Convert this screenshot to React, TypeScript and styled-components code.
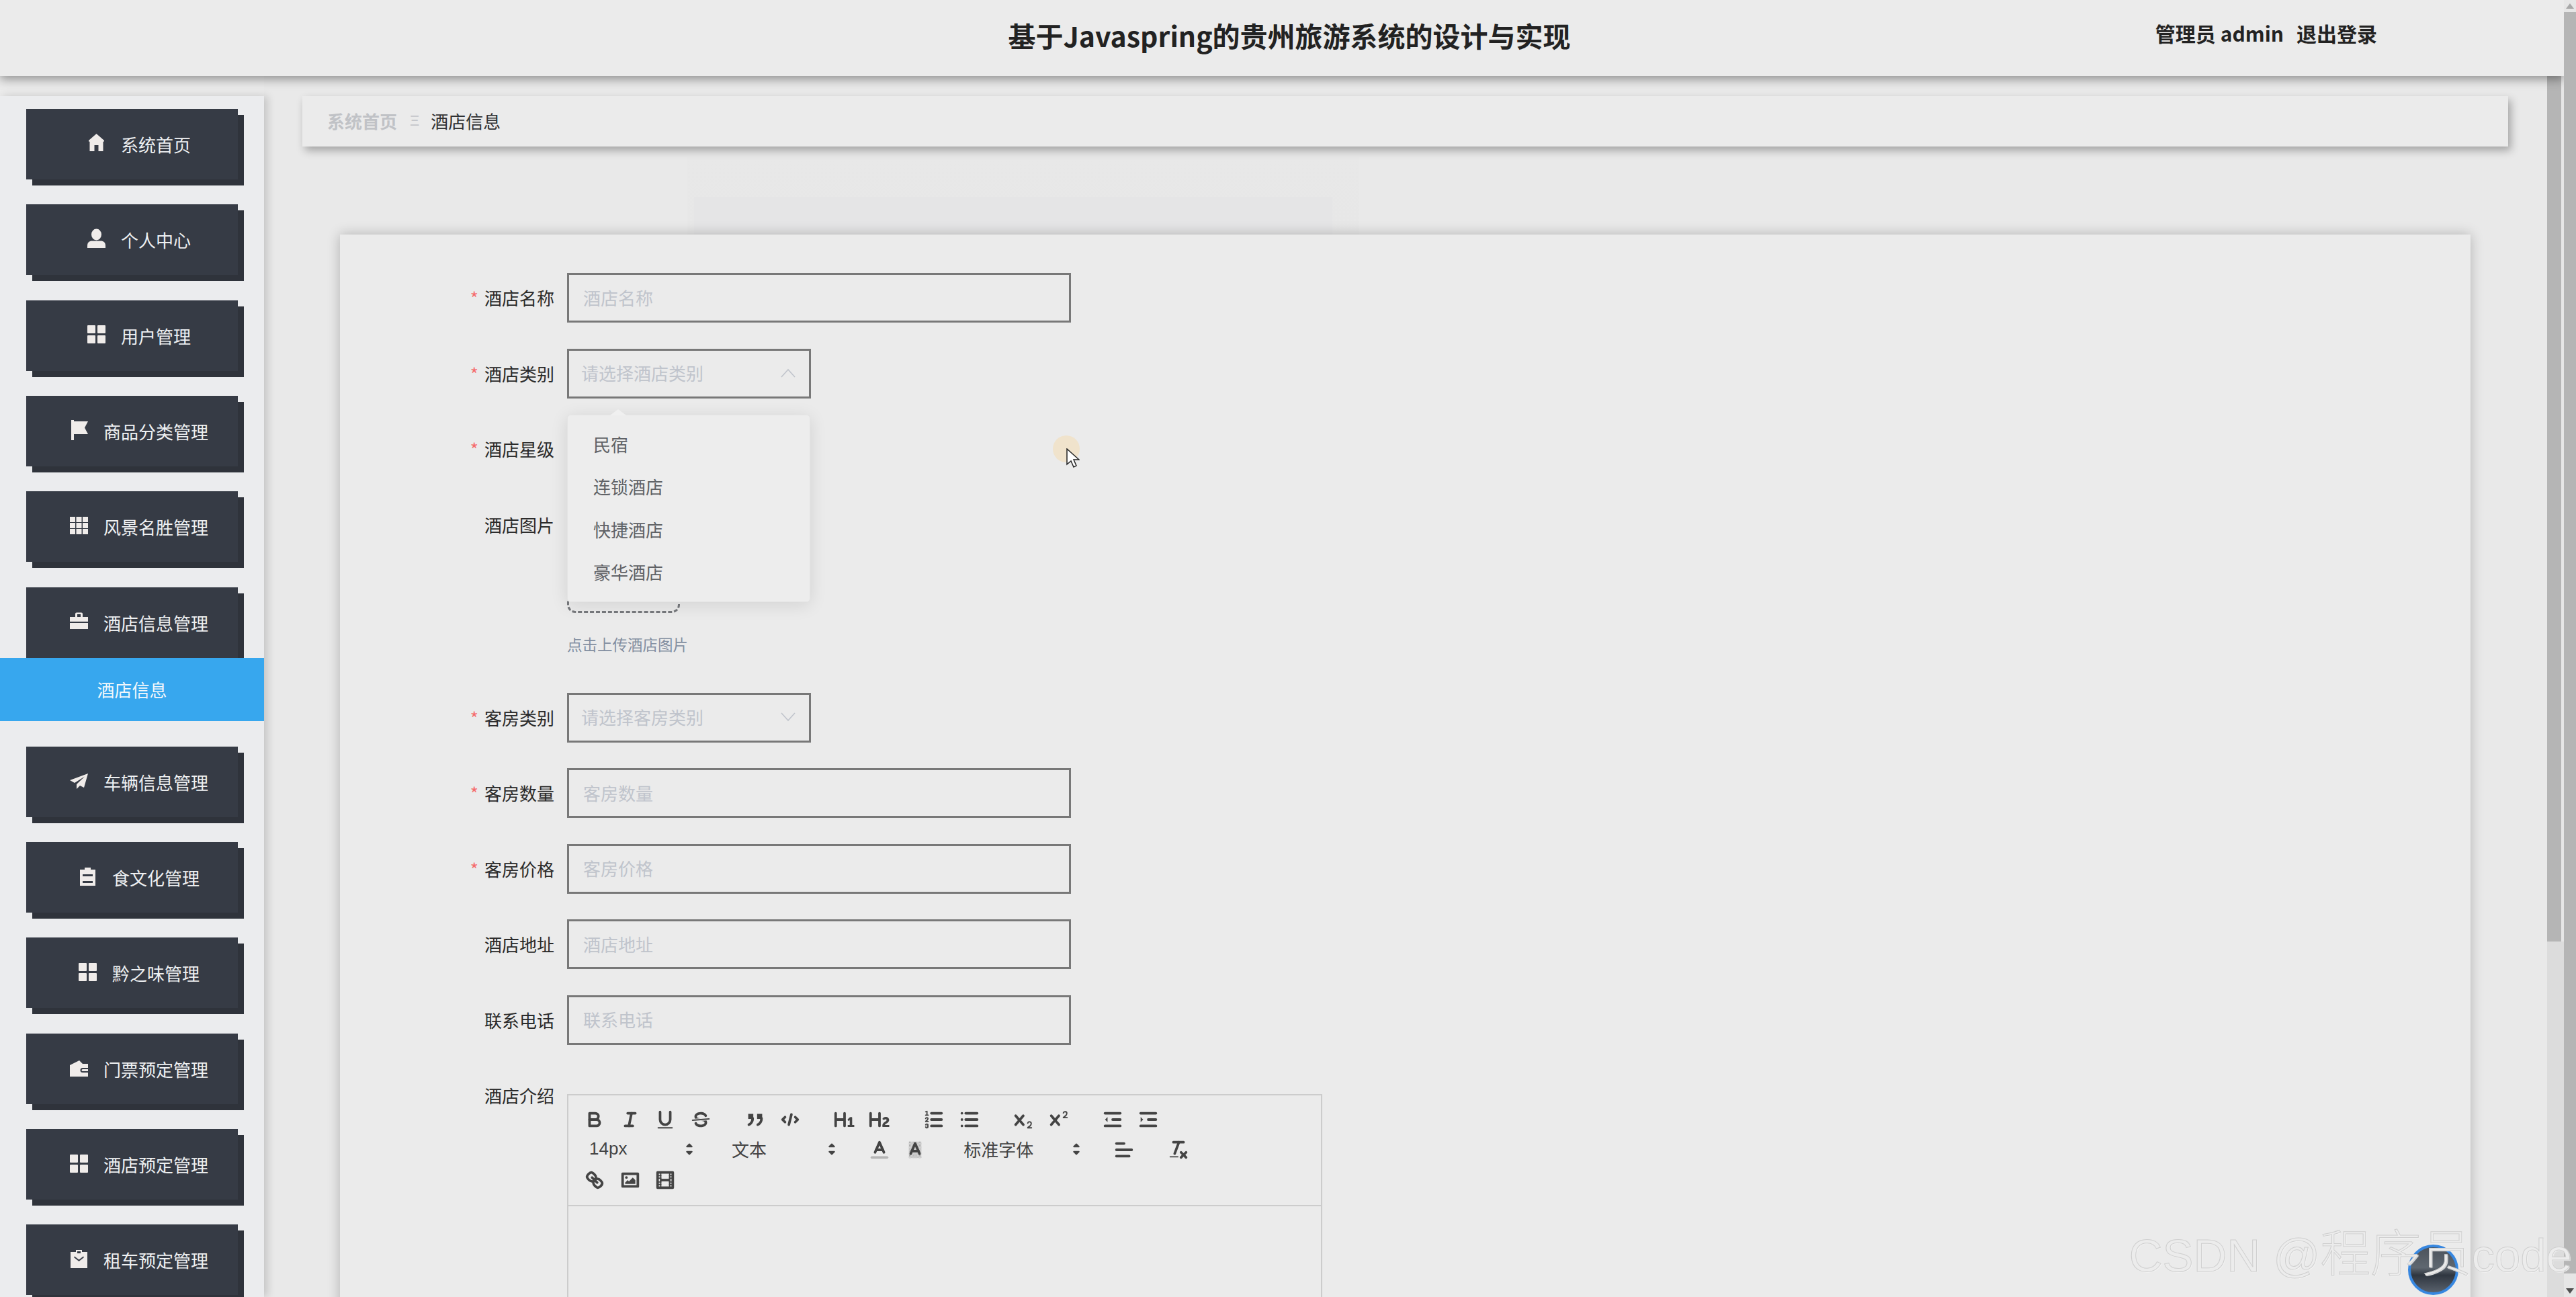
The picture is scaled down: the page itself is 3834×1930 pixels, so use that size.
import React from "react";
import styled, { createGlobalStyle } from "styled-components";

const CJK = `"Noto Sans CJK SC", "Noto Sans", sans-serif`;

const Global = createGlobalStyle`
  html, body { margin: 0; padding: 0; background: #ebebeb; }
  body { font-family: ${CJK}; overflow: hidden; }
  * { box-sizing: border-box; }
`;

const Page = styled.div`
  position: relative;
  display: flex;
  width: 3834px;
  height: 1930px;
  overflow: hidden;
  background: #ebebeb;
`;
const Viewport = styled.div`
  flex: 1;
  min-width: 0;
  display: flex;
  flex-direction: column;
`;
const Header = styled.header`
  position: relative;
  z-index: 5;
  flex: none;
  height: 113px;
  display: grid;
  grid-template-columns: 1fr auto 1fr;
  align-items: center;
  background: #ebebeb;
  box-shadow: 0 5px 14px rgba(0, 0, 0, 0.38);
`;
const Title = styled.h1`
  grid-column: 2;
  margin: 0 0 7px 22px;
  font-size: 41px;
  font-weight: 700;
  line-height: 1.2;
  color: #222;
  white-space: nowrap;
`;
const UserBar = styled.div`
  grid-column: 3;
  justify-self: end;
  display: flex;
  gap: 19px;
  margin: 0 278px 15px 0;
  font-size: 30px;
  font-weight: 700;
  line-height: 1.2;
  color: #222;
  white-space: nowrap;
`;
const Body = styled.div`
  flex: 1;
  min-height: 0;
  display: flex;
`;
const Sidebar = styled.nav`
  position: relative;
  z-index: 2;
  flex: none;
  width: 393px;
  margin-top: 30px;
  padding-top: 19px;
  background: #ebecee;
  box-shadow: 5px 0 12px rgba(0, 0, 0, 0.16);
`;
const NavButton = styled.div<{ $open?: boolean }>`
  display: flex;
  align-items: center;
  justify-content: center;
  width: 315px;
  height: 105px;
  margin: 0 0 ${(p) => (p.$open ? 0 : "37.35px")} 39px;
  padding-left: 21px;
  background: #363b45;
  box-shadow: 9px 9px 0 #2f333b;
  color: #eef0f2;
  font-size: 26px;
  line-height: 1;
  white-space: nowrap;
`;
const NavIcon = styled.svg`
  flex: none;
  width: 27px;
  height: 30px;
  margin: -4px 23px 0 0;
  fill: #f0ecea;
`;
const NavLabel = styled.span`
  margin-top: 1px;
`;
const SubItem = styled.div`
  display: flex;
  align-items: center;
  justify-content: center;
  height: 94px;
  margin-bottom: 38px;
  background: #37a7ee;
  color: #f2f7fb;
  font-size: 26px;
`;
const Main = styled.main`
  flex: 1;
  min-width: 0;
  padding: 30px 58px 0 57px;
  background-color: #e9e9e9;
  background-image: linear-gradient(#e5e5e6, #e5e5e6), linear-gradient(#e8e8e8, #e7e7e7);
  background-repeat: no-repeat;
  background-size: 950px 56px, 1000px 118px;
  background-position: 640px 180px, 630px 120px;
`;
const Crumbs = styled.div`
  display: flex;
  align-items: center;
  height: 75px;
  padding: 0 0 2px 37px;
  background: #ebebeb;
  box-shadow: 4px 6px 12px rgba(0, 0, 0, 0.3);
  font-size: 26px;
`;
const CrumbRoot = styled.span`
  color: #c0c2c6;
  font-weight: 700;
`;
const CrumbSep = styled.span`
  margin: 0 17px 0 19px;
  color: #c4c6ca;
  font-size: 22px;
  font-family: "Liberation Sans", sans-serif;
`;
const CrumbCurrent = styled.span`
  color: #303133;
`;
const Card = styled.section`
  position: relative;
  margin: 131px 56px 0;
  padding-top: 57px;
  padding-bottom: 60px;
  background: #ebebeb;
  box-shadow: 0 0 18px rgba(0, 0, 0, 0.24);
`;
const Row = styled.div`
  display: flex;
  align-items: flex-start;
  margin-bottom: 38.5px;
`;
const Label = styled.label<{ $required?: boolean }>`
  flex: none;
  width: 319px;
  margin-right: 19px;
  height: 74px;
  line-height: 74px;
  text-align: right;
  font-size: 26px;
  color: #2a2a2a;
  &::before {
    content: ${(p) => (p.$required ? '"*"' : '""')};
    margin-right: 9px;
    color: #f56c6c;
  }
`;
const TextInput = styled.input`
  display: block;
  width: 750px;
  height: 74px;
  padding: 0 21px 2px;
  border: 3px solid #787878;
  border-radius: 0;
  outline: none;
  background: transparent;
  font-family: ${CJK};
  font-size: 26px;
  color: #606266;
  &::placeholder {
    color: #c0c4cc;
    opacity: 1;
  }
`;
const SelectWrap = styled.div`
  position: relative;
`;
const SelectBox = styled.div`
  display: flex;
  align-items: center;
  justify-content: space-between;
  width: 363px;
  height: 74px;
  padding: 0 20px 2px 18px;
  border: 3px solid #787878;
  font-size: 26px;
  color: #c0c4cc;
`;
const Chevron = styled.svg`
  width: 22px;
  height: 14px;
  fill: none;
  stroke: #c0c4cc;
  stroke-width: 1.6;
`;
const Dropdown = styled.ul`
  position: absolute;
  z-index: 3;
  left: 0;
  top: 98px;
  width: 362px;
  height: 279px;
  margin: 0;
  padding: 11px 0 0;
  list-style: none;
  background: #ededed;
  border: 1px solid #e4e4e4;
  border-radius: 5px;
  box-shadow: 0 4px 26px rgba(0, 0, 0, 0.11);
  &::before {
    content: "";
    position: absolute;
    left: 63px;
    top: -9px;
    border-left: 12px solid transparent;
    border-right: 12px solid transparent;
    border-bottom: 9px solid #f0f0f0;
  }
`;
const Option = styled.li`
  height: 63.5px;
  line-height: 63.5px;
  padding-left: 38px;
  font-size: 26px;
  color: #606266;
`;
const Upload = styled.div`
  width: 168px;
  height: 168px;
  border: 3px dashed #77797d;
  border-radius: 12px;
`;
const Hint = styled.div`
  margin: 30px 0 17.5px;
  height: 33px;
  line-height: 33px;
  font-size: 22.5px;
  color: #838fa1;
`;
const Editor = styled.div`
  width: 1124px;
  margin-top: 35px;
  border: 2px solid #cccccc;
`;
const Toolbar = styled.div`
  height: 165px;
  padding: 13px 0 0 13px;
  border-bottom: 2px solid #cccccc;
`;
const ToolRow = styled.div`
  display: flex;
  height: 45px;
`;
const ToolGroup = styled.div`
  display: flex;
  margin-right: 28px;
`;
const ToolButton = styled.span`
  display: flex;
  align-items: center;
  justify-content: center;
  width: 52.6px;
  height: 45px;
`;
const ToolIcon = styled.svg`
  width: 34px;
  height: 34px;
  fill: none;
  stroke: #444;
  stroke-width: 2;
  stroke-linecap: round;
  stroke-linejoin: round;
  .f { fill: #444; stroke: none; }
  .t { stroke-width: 1; }
`;
const Picker = styled.div<{ $w: number }>`
  position: relative;
  display: flex;
  align-items: center;
  justify-content: space-between;
  width: ${(p) => p.$w}px;
  height: 45px;
  margin-right: 28px;
  padding: 0 0 2px 18px;
  font-family: "Liberation Sans", ${CJK};
  font-size: 26px;
  color: #444;
`;
const PickerArrows = styled.svg`
  width: 34px;
  height: 34px;
  fill: #444;
  stroke: #444;
  stroke-linejoin: round;
`;
const EditorBody = styled.div`
  height: 400px;
`;
const InnerScroll = styled.div`
  flex: none;
  width: 25px;
  background: #dcdcdc;
`;
const InnerThumb = styled.div`
  width: 21px;
  height: 1288px;
  background: #b5b5b5;
  box-shadow: 4px 0 0 #e6e6e6;
`;
const OuterScroll = styled.div`
  position: relative;
  z-index: 6;
  flex: none;
  width: 18px;
  display: flex;
  flex-direction: column;
  background: #e6e6e6;
`;
const ScrollCap = styled.div`
  flex: none;
  height: 18px;
  display: flex;
  align-items: center;
  justify-content: center;
`;
const OuterThumb = styled.div`
  flex: none;
  height: 1877px;
  background: #b5b5b5;
`;
const ScrollRest = styled.div`
  flex: 1;
`;
const Triangle = styled.i<{ $down?: boolean; $c: string }>`
  display: block;
  border-left: 6px solid transparent;
  border-right: 6px solid transparent;
  ${(p) => (p.$down ? "border-top" : "border-bottom")}: 8px solid ${(p) => p.$c};
`;
const CursorHalo = styled.div`
  position: absolute;
  z-index: 4;
  left: 1061px;
  top: 299px;
  width: 40px;
  height: 40px;
  border-radius: 50%;
  background: #f0e3cc;
`;
const CursorArrow = styled.svg`
  position: absolute;
  z-index: 4;
  left: 1081px;
  top: 318px;
  width: 20px;
  height: 30px;
`;
const Avatar = styled.div`
  position: absolute;
  z-index: 7;
  left: 3584px;
  top: 1852px;
  width: 75px;
  height: 75px;
  border-radius: 50%;
  border: 4px solid #3787e0;
  background: linear-gradient(#4c535c 0, #5f6770 45%, #2f3640 62%, #59616c 100%);
`;
const Watermark = styled.div`
  position: absolute;
  z-index: 8;
  right: 6px;
  top: 1822px;
  font-family: "Liberation Sans", ${CJK};
  font-size: 69px;
  line-height: 88px;
  white-space: nowrap;
  color: #ececec;
  -webkit-text-stroke: 1px #cfcfcf;
  text-shadow: 1px 1px 1px #f7f7f7;
`;
const WatermarkCjk = styled.span`
  font-size: 75px;
  font-weight: 300;
`;

const navIcons: Record<string, React.ReactNode> = {
  home: <path d="M13.5 1 25 11v1.5l-1.5.3V27H16.5v-9h-6v9H3.500V12.800L2 12.500V11z" />,
  user: (
    <>
      <ellipse cx="13.5" cy="9" rx="7.500" ry="8.500" />
      <path d="M0 29v-3.500C0 21 3 18.500 7 18.500h13c4 0 7 2.500 7 7V29z" />
    </>
  ),
  menu: (
    <>
      <rect x="0" y="2" width="12" height="12" rx="1" />
      <rect x="15" y="2" width="12" height="12" rx="1" />
      <rect x="0" y="17" width="12" height="12" rx="1" />
      <rect x="15" y="17" width="12" height="12" rx="1" />
    </>
  ),
  flag: <path d="M2 0h4v2h21l-5 9.500 5 9.500H6v9H2z" />,
  grid: (
    <>
      {[2, 11, 20].map((y) =>
        [0, 9.500, 19].map((x) => <rect key={`${x}-${y}`} x={x} y={y} width="8" height="8" />)
      )}
    </>
  ),
  case: (
    <path
      fillRule="evenodd"
      d="M8 4.500a2 2 0 0 1 2-2h7a2 2 0 0 1 2 2V9h8v7H0V9h8zM11 5v4h5V5zM0 18h27v9H0z"
    />
  ),
  plane: <path d="M27 5 0 15l7 4 15-9.500L10 21v7l5-5 6 3z" />,
  clip: (
    <path
      fillRule="evenodd"
      d="M9 2h9v3h7v24H2V5h7zM6 12v3h15v-3zM6 22v3h15v-3z"
    />
  ),
  wallet: (
    <path
      fillRule="evenodd"
      d="M0 12 14 5l5 5H27v6H19a3.500 3.500 0 0 0 0 7h8v6H0zM19 18h8v3h-8a1.500 1.500 0 0 1 0-3z"
    />
  ),
  claim: (
    <path
      fillRule="evenodd"
      d="M9 2h9v3h8v24H1V5h8zM11 4v3h5V4zM6 13l7.500 6L21 13l-1-1.500-6.500 5-6.500-5z"
    />
  ),
};

const navTop = [
  ["home", "系统首页"],
  ["user", "个人中心"],
  ["menu", "用户管理"],
  ["flag", "商品分类管理"],
  ["grid", "风景名胜管理"],
];
const navBottom = [
  ["plane", "车辆信息管理"],
  ["clip", "食文化管理"],
  ["menu", "黔之味管理"],
  ["wallet", "门票预定管理"],
  ["menu", "酒店预定管理"],
  ["claim", "租车预定管理"],
];

const NavEntry = ({ icon, label, open }: { icon: string; label: string; open?: boolean }) => (
  <NavButton $open={open}>
    <NavIcon viewBox="0 0 27 30">{navIcons[icon]}</NavIcon>
    <NavLabel>{label}</NavLabel>
  </NavButton>
);

const T = ({ children }: { children: React.ReactNode }) => (
  <ToolButton>
    <ToolIcon viewBox="0 0 18 18">{children}</ToolIcon>
  </ToolButton>
);

const xMark =
  "M9.65,5.241a1,1,0,0,0-1.409.108L6,7.964,3.759,5.349A1,1,0,0,0,2.192,6.592Q2.21,6.6,2.241,6.651L4.684,9.5,2.241,12.35A1,1,0,0,0,3.71,13.707q0.02-.02.049-0.06L6,11.036l2.241,2.614a1,1,0,0,0,1.567-1.243Q9.79,12.4,9.759,12.35L7.316,9.5,9.759,6.651A1,1,0,0,0,9.65,5.241Z";
const two =
  "M15.5,15H13.861a3.858,3.858,0,0,0,1.914-2.975,1.8,1.8,0,0,0-1.6-1.751A1.921,1.921,0,0,0,12.021,11.7a0.5,0.5,0,1,0,.957.291,0.914,0.914,0,0,1,1.053-.725,0.81,0.81,0,0,1,.744.762c0,1.076-1.17,1.87-1.94,2.431A1.456,1.456,0,0,0,12,15.5a0.5,0.5,0,0,0,.5.5h3A0.5,0.5,0,0,0,15.5,15Z";

const Arrows = () => (
  <PickerArrows viewBox="0 0 18 18">
    <polygon points="7 11 9 13 11 11 7 11" />
    <polygon points="7 7 9 5 11 7 7 7" />
  </PickerArrows>
);

const EditorToolbar = () => (
  <Toolbar>
    <ToolRow>
      <ToolGroup>
        <T>
          <path d="M5,4H9.5A2.5,2.5,0,0,1,12,6.5v0A2.5,2.5,0,0,1,9.5,9H5V4Z" />
          <path d="M5,9h5.5A2.5,2.5,0,0,1,13,11.5v0A2.5,2.5,0,0,1,10.5,14H5V9Z" />
        </T>
        <T>
          <line x1="7" x2="13" y1="4" y2="4" />
          <line x1="5" x2="11" y1="14" y2="14" />
          <line x1="8" x2="10" y1="14" y2="4" />
        </T>
        <T>
          <path d="M5,3V9a4.012,4.012,0,0,0,4,4H9a4.012,4.012,0,0,0,4-4V3" />
          <rect className="f" height="1" rx=".5" ry=".5" width="12" x="3" y="15" />
        </T>
        <T>
          <line className="t" x1="15.5" x2="2.5" y1="8.5" y2="9.5" />
          <path className="f" d="M9.007,8C6.542,7.791,6,7.519,6,6.5,6,5.792,7.283,5,9,5c1.571,0,2.765.679,2.969,1.309a1,1,0,0,0,1.9-.617C13.356,4.106,11.354,3,9,3,6.2,3,4,4.538,4,6.5a3.2,3.2,0,0,0,.5,1.843Z" />
          <path className="f" d="M8.984,10C11.457,10.208,12,10.479,12,11.5c0,.708-1.283,1.5-3,1.5-1.571,0-2.765-.679-2.969-1.309a1,1,0,1,0-1.9.617C4.644,13.894,6.646,15,9,15c2.8,0,5-1.538,5-3.5a3.2,3.2,0,0,0-.5-1.843Z" />
        </T>
      </ToolGroup>
      <ToolGroup>
        <T>
          <rect className="f" height="4" width="4" x="3.500" y="4.500" />
          <rect className="f" height="4" width="4" x="10.500" y="4.500" />
          <path d="M7,8c0,4.031-3,5-3,5" />
          <path d="M14,8c0,4.031-3,5-3,5" />
        </T>
        <T>
          <polyline points="5 7 3 9 5 11" />
          <polyline points="13 7 15 9 13 11" />
          <line x1="10" x2="8" y1="5" y2="13" />
        </T>
      </ToolGroup>
      <ToolGroup>
        <T>
          <path className="f" d="M10,4V14a1,1,0,0,1-2,0V10H3v4a1,1,0,0,1-2,0V4A1,1,0,0,1,3,4V8H8V4a1,1,0,0,1,2,0Zm6.068,9.209H14.99V7.599a.541.541,0,0,0-.605-.605h-.627a1.011,1.011,0,0,0-.748.297L11.645,8.566a.544.544,0,0,0-.022.858l.286.308a.539.539,0,0,0,.847.033l.099-.088a1.214,1.214,0,0,0,.242-.353h.022s-.011.309-.011.605V13.209H12.041a.541.541,0,0,0-.605.605v.44a.541.541,0,0,0,.605.605h4.027a.541.541,0,0,0,.605-.605v-.44A.541.541,0,0,0,16.068,13.209Z" />
        </T>
        <T>
          <path className="f" d="M16.74,13.814v.44a.541.541,0,0,1-.605.605H11.855a.584.584,0,0,1-.649-.605V14.013c0-2.905,3.399-3.422,3.399-4.555a.777.777,0,0,0-.847-.781,1.177,1.177,0,0,0-.836.385c-.275.264-.561.374-.858.132l-.429-.341c-.308-.242-.385-.518-.154-.814a2.972,2.972,0,0,1,2.454-1.177,2.454,2.454,0,0,1,2.684,2.409c0,2.453-3.179,2.927-3.278,3.938h2.794A.541.541,0,0,1,16.74,13.814ZM9,3A1,1,0,0,0,8,4V8H3V4A1,1,0,0,0,1,4V14a1,1,0,0,0,2,0V10H8v4a1,1,0,0,0,2,0V4A1,1,0,0,0,9,3Z" />
        </T>
      </ToolGroup>
      <ToolGroup>
        <T>
          <line x1="7" x2="15" y1="4" y2="4" />
          <line x1="7" x2="15" y1="9" y2="9" />
          <line x1="7" x2="15" y1="14" y2="14" />
          <line className="t" x1="2.500" x2="4.500" y1="5.500" y2="5.500" />
          <path className="f" d="M3.5,6A0.5,0.5,0,0,1,3,5.5V3.085l-0.276.138A0.5,0.5,0,0,1,2.053,3c-0.124-.247-0.023-0.324.224-0.447l1-.5A0.5,0.5,0,0,1,4,2.5v3A0.5,0.5,0,0,1,3.5,6Z" />
          <path className="t" d="M4.5,10.5h-2c0-.234,1.85-1.076,1.85-2.234A0.959,0.959,0,0,0,2.5,8.156" />
          <path className="t" d="M2.5,14.846a0.959,0.959,0,0,0,1.85-.109A0.7,0.7,0,0,0,3.75,14a0.688,0.688,0,0,0,.6-0.736,0.959,0.959,0,0,0-1.85-.109" />
        </T>
        <T>
          <line x1="6" x2="15" y1="4" y2="4" />
          <line x1="6" x2="15" y1="9" y2="9" />
          <line x1="6" x2="15" y1="14" y2="14" />
          <line x1="3" x2="3" y1="4" y2="4" />
          <line x1="3" x2="3" y1="9" y2="9" />
          <line x1="3" x2="3" y1="14" y2="14" />
        </T>
      </ToolGroup>
      <ToolGroup>
        <T>
          <path className="f" d={two} />
          <path className="f" d={xMark} />
        </T>
        <T>
          <path className="f" d={two} transform="translate(0 -8)" />
          <path className="f" d={xMark} />
        </T>
      </ToolGroup>
      <ToolGroup>
        <T>
          <line x1="3" x2="15" y1="14" y2="14" />
          <line x1="3" x2="15" y1="4" y2="4" />
          <line x1="9" x2="15" y1="9" y2="9" />
          <polyline className="f" points="5 7 5 11 3 9 5 7" />
        </T>
        <T>
          <line x1="3" x2="15" y1="14" y2="14" />
          <line x1="3" x2="15" y1="4" y2="4" />
          <line x1="9" x2="15" y1="9" y2="9" />
          <polyline className="f" points="3 7 3 11 5 9 3 7" />
        </T>
      </ToolGroup>
    </ToolRow>
    <ToolRow>
      <Picker $w={184}>
        <span>14px</span>
        <Arrows />
      </Picker>
      <Picker $w={184}>
        <span>文本</span>
        <Arrows />
      </Picker>
      <ToolGroup>
        <T>
          <line x1="3" x2="15" y1="15" y2="15" stroke="#b5b5b5" />
          <polyline points="5.5 11 9 3 12.5 11" />
          <line x1="11.63" x2="6.38" y1="9" y2="9" />
        </T>
        <T>
          <defs>
            <pattern id="hatch" width="1.1" height="1.1" patternUnits="userSpaceOnUse">
              <rect width=".4" height=".4" fill="#666" stroke="none" />
              <rect x=".55" y=".55" width=".4" height=".4" fill="#666" stroke="none" />
            </pattern>
          </defs>
          <rect x="4" y="2.500" width="10" height="13" fill="url(#hatch)" stroke="none" />
          <polyline points="5.5 12 9 4 12.5 12" />
          <line x1="11.63" x2="6.38" y1="10" y2="10" />
        </T>
      </ToolGroup>
      <Picker $w={203}>
        <span>标准字体</span>
        <Arrows />
      </Picker>
      <ToolGroup>
        <T>
          <line x1="3" x2="15" y1="9" y2="9" />
          <line x1="3" x2="13" y1="14" y2="14" />
          <line x1="3" x2="9" y1="4" y2="4" />
        </T>
      </ToolGroup>
      <ToolGroup>
        <T>
          <line x1="5" x2="13" y1="3" y2="3" />
          <line x1="6" x2="9.35" y1="12" y2="3" />
          <line x1="11" x2="15" y1="11" y2="15" />
          <line x1="15" x2="11" y1="11" y2="15" />
          <rect className="f" height="1" rx=".5" ry=".5" width="7" x="2" y="14" />
        </T>
      </ToolGroup>
    </ToolRow>
    <ToolRow>
      <T>
        <line x1="7" x2="11" y1="7" y2="11" />
        <path d="M8.9,4.577a3.476,3.476,0,0,1,.36,4.679A3.476,3.476,0,0,1,4.577,8.9C3.185,7.5,2.035,6.4,4.217,4.217S7.5,3.185,8.9,4.577Z" />
        <path d="M13.423,9.1a3.476,3.476,0,0,0-4.679-.36,3.476,3.476,0,0,0,.36,4.679c1.392,1.392,2.5,2.542,4.679.36S14.815,10.5,13.423,9.1Z" />
      </T>
      <T>
        <rect height="10" width="12" x="3" y="4" />
        <circle className="f" cx="6" cy="7" r="1" />
        <polyline className="f" points="5 12 5 11 7 9 8 10 11 7 13 9 13 12 5 12" />
      </T>
      <T>
        <rect height="12" width="12" x="3" y="3" />
        <rect className="f" height="12" width="1" x="5" y="3" />
        <rect className="f" height="12" width="1" x="12" y="3" />
        <rect className="f" height="2" width="8" x="5" y="8" />
        <rect className="f" height="1" width="3" x="3" y="5" />
        <rect className="f" height="1" width="3" x="3" y="7" />
        <rect className="f" height="1" width="3" x="3" y="10" />
        <rect className="f" height="1" width="3" x="3" y="12" />
        <rect className="f" height="1" width="3" x="12" y="5" />
        <rect className="f" height="1" width="3" x="12" y="7" />
        <rect className="f" height="1" width="3" x="12" y="10" />
        <rect className="f" height="1" width="3" x="12" y="12" />
      </T>
    </ToolRow>
  </Toolbar>
);

const InputRow = ({ label, required }: { label: string; required?: boolean }) => (
  <Row>
    <Label $required={required}>{label}</Label>
    <TextInput placeholder={label} />
  </Row>
);

export default function App() {
  return (
    <Page>
      <Global />
      <Viewport>
        <Header>
          <Title>基于Javaspring的贵州旅游系统的设计与实现</Title>
          <UserBar>
            <span>管理员 admin</span>
            <span>退出登录</span>
          </UserBar>
        </Header>
        <Body>
          <Sidebar>
            {navTop.map(([icon, label]) => (
              <NavEntry key={label} icon={icon} label={label} />
            ))}
            <NavEntry icon="case" label="酒店信息管理" open />
            <SubItem>酒店信息</SubItem>
            {navBottom.map(([icon, label]) => (
              <NavEntry key={label} icon={icon} label={label} />
            ))}
          </Sidebar>
          <Main>
            <Crumbs>
              <CrumbRoot>系统首页</CrumbRoot>
              <CrumbSep>Ξ</CrumbSep>
              <CrumbCurrent>酒店信息</CrumbCurrent>
            </Crumbs>
            <Card>
              <CursorHalo />
              <CursorArrow viewBox="0 0 20 30">
                <path d="M1 1v23l6-5 4 9 4-2-4-9h8z" fill="#fff" stroke="#222" strokeWidth="1.5" />
              </CursorArrow>
              <InputRow label="酒店名称" required />
              <Row>
                <Label $required>酒店类别</Label>
                <SelectWrap>
                  <SelectBox>
                    <span>请选择酒店类别</span>
                    <Chevron viewBox="0 0 22 14">
                      <polyline points="1 13 11 2 21 13" />
                    </Chevron>
                  </SelectBox>
                  <Dropdown>
                    <Option>民宿</Option>
                    <Option>连锁酒店</Option>
                    <Option>快捷酒店</Option>
                    <Option>豪华酒店</Option>
                  </Dropdown>
                </SelectWrap>
              </Row>
              <Row>
                <Label $required>酒店星级</Label>
              </Row>
              <Row>
                <Label>酒店图片</Label>
                <div>
                  <Upload />
                  <Hint>点击上传酒店图片</Hint>
                </div>
              </Row>
              <Row>
                <Label $required>客房类别</Label>
                <SelectBox>
                  <span>请选择客房类别</span>
                  <Chevron viewBox="0 0 22 14">
                    <polyline points="1 1 11 12 21 1" />
                  </Chevron>
                </SelectBox>
              </Row>
              <InputRow label="客房数量" required />
              <InputRow label="客房价格" required />
              <InputRow label="酒店地址" />
              <InputRow label="联系电话" />
              <Row>
                <Label>酒店介绍</Label>
                <Editor>
                  <EditorToolbar />
                  <EditorBody />
                </Editor>
              </Row>
            </Card>
          </Main>
          <InnerScroll>
            <InnerThumb />
          </InnerScroll>
        </Body>
      </Viewport>
      <OuterScroll>
        <ScrollCap>
          <Triangle $c="#a8a8a8" />
        </ScrollCap>
        <OuterThumb />
        <ScrollRest />
        <ScrollCap>
          <Triangle $down $c="#505050" />
        </ScrollCap>
      </OuterScroll>
      <Avatar />
      <Watermark>
        CSDN @<WatermarkCjk>程序员</WatermarkCjk>code
      </Watermark>
    </Page>
  );
}
